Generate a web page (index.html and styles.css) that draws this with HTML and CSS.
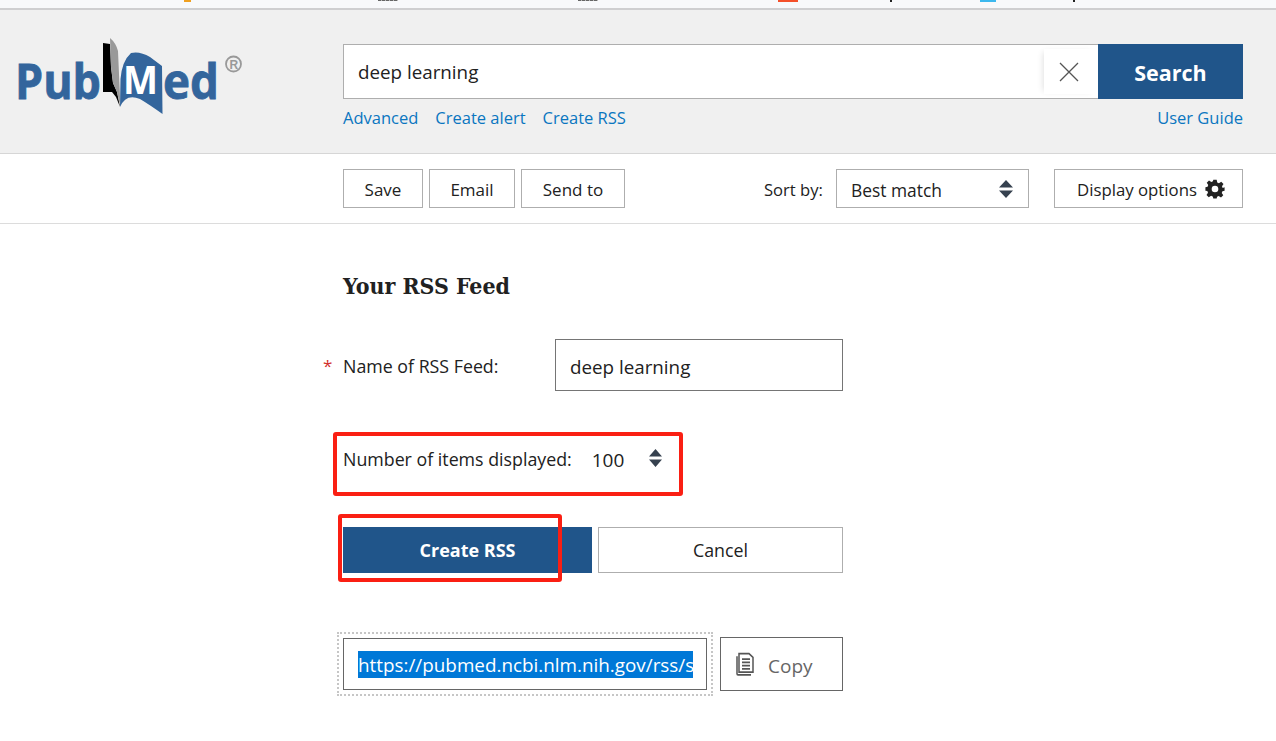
FILE: index.html
```html
<!DOCTYPE html>
<html lang="en">
<head>
<meta charset="utf-8">
<title>PubMed RSS</title>
<link rel="stylesheet" href="styles.css">
</head>
<body>
<div class="strip">
  <i class="bit bit-orange"></i>
  <i class="bit bit-tiny bit-h1"></i>
  <i class="bit bit-tiny bit-h2"></i>
  <i class="bit bit-red"></i>
  <i class="bit bit-dot1"></i>
  <i class="bit bit-blue"></i>
  <i class="bit bit-dot2"></i>
</div>
<header class="header">
  <a class="logo" aria-label="PubMed">
    <svg width="236" height="80" viewBox="-6 0 236 80">
      <text class="logo-text" x="-3" y="62" textLength="86" lengthAdjust="spacingAndGlyphs">Pub</text>
      <path fill="#000" d="M85 6 L92 7 L93 30 L95 46 L99 55 L102 70 L98 60 L94 55 L85 55 Z"/>
      <path fill="#999" d="M92 1 Q98 6 100 14 L102 60 L102 68 L99 55 L95 46 L93 30 Z"/>
      <path fill="#33659c" d="M102 70 L102.500 42 Q104 24 113 16 Q122 14 132 20 L144 29 L144.500 77 Q132 68 122 62 Q108 56 102 70 Z"/>
      <text class="logo-m" x="105" y="57" textLength="35" lengthAdjust="spacingAndGlyphs">M</text>
      <text class="logo-text" x="145" y="62" textLength="56" lengthAdjust="spacingAndGlyphs">ed</text>
      <circle cx="215.500" cy="27" r="7.500" fill="none" stroke="#999" stroke-width="1.800"/>
      <text class="logo-r" x="211.500" y="31.500">R</text>
    </svg>
  </a>
  <div class="search">
    <div class="search-row">
      <div class="search-input">
        <span class="search-term">deep learning</span>
        <span class="clear">
          <svg width="20" height="20" viewBox="0 0 20 20"><path d="M1 1 L19 19 M19 1 L1 19" stroke="#555" stroke-width="1.300" fill="none"/></svg>
        </span>
      </div>
      <button class="search-btn">Search</button>
    </div>
    <nav class="links">
      <a>Advanced</a>
      <a>Create alert</a>
      <a>Create RSS</a>
      <a class="guide">User Guide</a>
    </nav>
  </div>
</header>
<section class="toolbar">
  <button class="tool tool-save">Save</button>
  <button class="tool tool-email">Email</button>
  <button class="tool tool-send">Send to</button>
  <span class="sort-label">Sort by:</span>
  <div class="tool sort-select">
    <span class="sort-value">Best match</span>
    <svg class="updown" width="14" height="18" viewBox="0 0 14 18"><path d="M7 0 L14 7.500 H0 Z M0 10.500 H14 L7 18 Z" fill="#36414f"/></svg>
  </div>
  <button class="tool display">
    <span>Display options</span>
    <svg class="gear" width="20" height="20" viewBox="0 0 24 24"><path fill="#222" fill-rule="evenodd" d="M10 1 H14 L14.700 4.300 L16.700 5.100 L19.500 3.300 L22.200 6 L20.400 8.800 L21.200 10.700 L23.500 10 V14 L20.900 14.700 L20.100 16.700 L21.900 19.500 L19.200 22.200 L16.400 20.400 L14.500 21.200 L14 23.500 H10 L9.300 20.900 L7.300 20.100 L4.500 21.900 L1.800 19.200 L3.600 16.400 L2.800 14.500 L0.500 14 V10 L3.100 9.300 L3.900 7.300 L2.100 4.500 L4.800 1.800 L7.600 3.600 L9.500 2.800 Z M12 8 A4 4 0 1 0 12 16 A4 4 0 1 0 12 8 Z"/></svg>
  </button>
</section>
<main class="panel">
  <h1 class="title">Your RSS Feed</h1>
  <div class="name-row">
    <span class="star">*</span>
    <label class="name-label">Name of RSS Feed:</label>
    <div class="name-input">deep learning</div>
  </div>
  <div class="count-row">
    <span>Number of items displayed:</span>
    <span class="count-value">100</span>
    <svg class="updown count-arrows" width="13" height="18" viewBox="0 0 14 18" preserveAspectRatio="none"><path d="M7 0 L14 7.500 H0 Z M0 10.500 H14 L7 18 Z" fill="#36414f"/></svg>
    <i class="mark mark-count"></i>
  </div>
  <div class="action-row">
    <button class="create">Create RSS</button>
    <button class="cancel">Cancel</button>
    <i class="mark mark-create"></i>
  </div>
  <div class="url-row">
    <div class="url-focus">
      <div class="url-input"><span class="url-selected">https://pubmed.ncbi.nlm.nih.gov/rss/s</span></div>
    </div>
    <button class="copy">
      <svg width="20" height="24" viewBox="0 0 20 22" preserveAspectRatio="none"><path d="M3 1.500 H13 L17 5 V18.500 H3 Z" fill="#fff" stroke="#555" stroke-width="1.500"/><path d="M1 4 V20 Q1 21 2 21 H15" fill="none" stroke="#555" stroke-width="1.500"/><path d="M6 6.500 H14 M6 9.500 H14 M6 12.500 H14 M6 15.500 H14" stroke="#555" stroke-width="1.500"/></svg>
      <span class="copy-label">Copy</span>
    </button>
  </div>
</main>
</body>
</html>
```
FILE: styles.css
```css
* { box-sizing: border-box; }
html, body { margin: 0; padding: 0; }
body {
  background: #fff;
  color: #212121;
  font-family: "Open Sans", "Noto Sans", sans-serif;
  font-size: 17px;
  width: 1276px;
  height: 741px;
  overflow: hidden;
}
button { font: inherit; color: inherit; background: #fff; cursor: pointer; }

.strip {
  height: 10px;
  background: #f8f9fb;
  border-bottom: 2px solid #cfcfd1;
  display: flex;
  align-items: flex-start;
  overflow: hidden;
}
.bit { display: block; height: 2px; flex: none; }
.bit-orange { width: 7px; margin-left: 184px; background: #f0a020; }
.bit-tiny { width: 20px; height: 1px; background: repeating-linear-gradient(90deg, #666 0 3px, #bbb 3px 4px); }
.bit-h1 { margin-left: 187px; }
.bit-h2 { margin-left: 180px; }
.bit-red { width: 20px; margin-left: 180px; background: #f4502a; }
.bit-dot1 { width: 2px; margin-left: 92px; background: #222; }
.bit-blue { width: 16px; margin-left: 88px; background: #3db8ee; }
.bit-dot2 { width: 2px; margin-left: 77px; background: #222; }

.header {
  height: 144px;
  background: #f0f0f0;
  border-bottom: 1px solid #d6d6d6;
  display: flex;
  padding: 34px 33px 0 12px;
}
.logo { width: 331px; flex: none; display: block; margin-top: -7px; height: 80px; }
.logo-text { font-family: "Open Sans", sans-serif; font-weight: 700; font-size: 49px; fill: #33659c; stroke: #33659c; stroke-width: .8px; }
.logo-m { font-family: "Open Sans", sans-serif; font-weight: 700; font-size: 40px; fill: #fff; }
.logo-r { font-family: "Liberation Sans", sans-serif; font-weight: 700; font-size: 12px; fill: #999; }

.search { flex: 1; display: flex; flex-direction: column; }
.search-row { display: flex; height: 55px; }
.search-input {
  flex: 1;
  background: #fff;
  border: 1px solid #aeaeae;
  border-right: 0;
  display: flex;
  align-items: center;
  justify-content: space-between;
  padding-left: 14px;
  font-size: 18.800px;
}
.search-term { padding-top: 1px; }
.clear {
  width: 54px;
  height: 45px;
  display: flex;
  align-items: center;
  justify-content: center;
  padding-right: 5px;
  background: #fff;
  box-shadow: -4px 0 6px -3px rgba(0,0,0,.12);
}
.search-btn {
  width: 145px;
  border: 0;
  background: #20558a;
  color: #fff;
  font-weight: 700;
  font-size: 21.500px;
  padding: 2px 0 0;
}
.links { display: flex; gap: 17px; margin-top: 7px; color: #0a76c0; font-size: 16.500px; line-height: 24px; }
.guide { margin-left: auto; }

.toolbar {
  height: 70px;
  border-bottom: 1px solid #dcdcdc;
  padding: 15px 33px 0 343px;
  display: flex;
  align-items: flex-start;
}
.tool {
  height: 39px;
  background: #fff;
  border: 1px solid #aeaeae;
  font-size: 17px;
  padding: 2px 0 0;
  flex: none;
}
.tool-save { width: 80px; }
.tool-email { width: 86px; margin-left: 6px; }
.tool-send { width: 104px; margin-left: 6px; }
.sort-label { margin-left: 139px; width: 72px; font-size: 16.600px; line-height: 41px; }
.sort-select {
  width: 193px;
  display: flex;
  align-items: center;
  justify-content: space-between;
  padding: 0 15px 0 14px;
  font-size: 17.400px;
}
.sort-value { padding-top: 2px; }
.display {
  width: 189px;
  margin-left: 25px;
  display: flex;
  align-items: center;
  justify-content: flex-start;
  gap: 8px;
  padding: 0 0 0 22px;
  font-size: 16.800px;
}
.display span { padding-top: 2px; }
.updown { flex: none; display: block; }

.panel { padding: 45px 0 0 343px; width: 843px; font-size: 17.800px; }
.title {
  margin: 1px 0 -1px;
  font-family: "DejaVu Serif", serif;
  font-stretch: condensed;
  font-size: 22.900px;
  font-weight: 700;
  line-height: 32px;
  color: #212121;
}
.name-row { position: relative; display: flex; align-items: center; margin-top: 38px; height: 52px; }
.star { position: absolute; left: -20px; top: 15px; color: #d2302c; font-size: 17px; }
.name-label { width: 212px; flex: none; padding-top: 1px; }
.name-input {
  flex: 1;
  height: 52px;
  border: 1px solid #757575;
  padding: 3px 14px 0;
  display: flex;
  align-items: center;
  font-size: 18.800px;
}
.count-row { position: relative; display: flex; align-items: center; margin-top: 53px; height: 30px; }
.count-value { margin-left: 20px; font-size: 19px; width: 57px; flex: none; padding-top: 2px; }
.count-arrows { margin-top: -2px; }
.action-row { position: relative; display: flex; gap: 6px; margin-top: 53px; height: 46px; }
.create { width: 249px; border: 0; background: #20558a; color: #fff; font-weight: 700; font-size: 18px; }
.cancel { flex: 1; border: 1px solid #aeaeae; background: #fff; }
.url-row { display: flex; align-items: center; margin: 59px 0 0 -6px; gap: 7px; }
.url-focus { width: 376px; height: 64px; padding: 4px; border: 2px dotted #c6c6c6; flex: none; }
.url-input {
  height: 100%;
  border: 1px solid #666;
  padding: 0 14px;
  display: flex;
  align-items: center;
  overflow: hidden;
  white-space: nowrap;
  font-size: 18.850px;
}
.url-selected { background: #0078d7; color: #fff; line-height: 25px; padding-top: 2px; display: block; width: 335px; flex: none; overflow: hidden; }
.copy {
  width: 123px;
  height: 54px;
  border: 1px solid #666;
  background: #fff;
  color: #666;
  font-size: 19px;
  display: flex;
  align-items: center;
  gap: 12px;
  padding: 0 0 0 15px;
}
.copy-label { padding-top: 3px; }
.mark { position: absolute; display: block; border: 4px solid #fa1f13; border-radius: 3px; pointer-events: none; }
.mark-count { left: -10px; top: -12px; width: 350px; height: 64px; }
.mark-create { left: -5px; top: -13px; width: 224px; height: 68px; }
```
